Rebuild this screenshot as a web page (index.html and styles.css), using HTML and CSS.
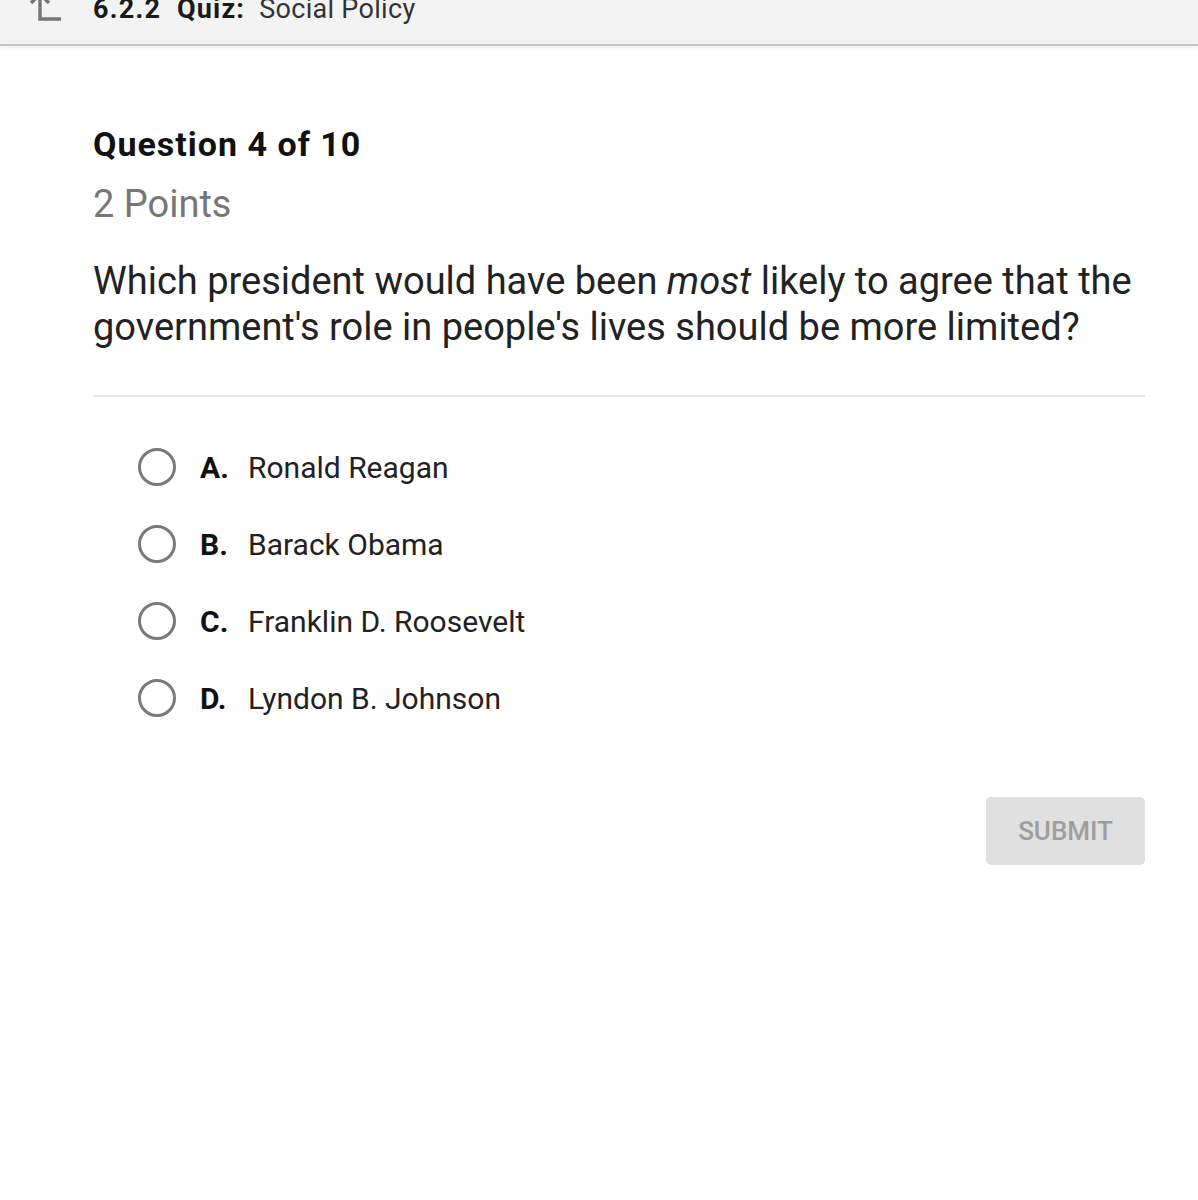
FILE: index.html
```html
<!DOCTYPE html>
<html>
<head>
<meta charset="utf-8">
<link rel="stylesheet" href="styles.css">
</head>
<body>
<header class="topbar">
  <svg class="back" width="36" height="30" viewBox="0 0 36 30">
    <path d="M13 -6 V19 H34" fill="none" stroke="#777" stroke-width="3.5"/>
    <path d="M4 3 L13 -6 L22 3" fill="none" stroke="#777" stroke-width="3.5"/>
  </svg>
  <div class="crumb"><b>6.2.2&nbsp; Quiz:</b>&nbsp; Social Policy</div>
</header>
<main class="content">
  <h1 class="qnum">Question 4 of 10</h1>
  <div class="points">2 Points</div>
  <p class="prompt">Which president would have been <i>most</i> likely to agree that the government's role in people's lives should be more limited?</p>
  <hr class="divider">
  <ul class="options">
    <li class="option"><span class="radio"></span><span class="letter">A.</span><span class="answer">Ronald Reagan</span></li>
    <li class="option"><span class="radio"></span><span class="letter">B.</span><span class="answer">Barack Obama</span></li>
    <li class="option"><span class="radio"></span><span class="letter">C.</span><span class="answer">Franklin D. Roosevelt</span></li>
    <li class="option"><span class="radio"></span><span class="letter">D.</span><span class="answer">Lyndon B. Johnson</span></li>
  </ul>
  <div class="actions"><button class="submit">SUBMIT</button></div>
</main>
</body>
</html>
```

FILE: styles.css
```css
html, body {
  margin: 0;
  padding: 0;
  background: #fff;
  font-family: Roboto, "Liberation Sans", sans-serif;
  color: #222;
}
.topbar {
  height: 44px;
  background: #f3f3f3;
  border-bottom: 2px solid #c6c6c6;
  box-shadow: 0 2px 2px rgba(0,0,0,0.06);
  display: flex;
  align-items: flex-start;
  overflow: hidden;
  position: relative;
}
.back {
  position: absolute;
  left: 27px;
  top: 0;
}
.crumb {
  margin-left: 93px;
  margin-top: -6px;
  font-size: 27px;
  line-height: 30px;
  color: #333;
  letter-spacing: 0.3px;
  white-space: nowrap;
}
.crumb b { color: #1a1a1a; letter-spacing: 1.2px; }
.content {
  padding: 0 53px 0 93px;
}
.qnum {
  margin: 0;
  padding-top: 78px;
  font-size: 34px;
  line-height: 40px;
  font-weight: 700;
  color: #111;
  letter-spacing: 1px;
}
.points {
  margin-top: 18px;
  font-size: 38px;
  line-height: 44px;
  color: #777;
}
.prompt {
  margin: 32px 0 0 0;
  font-size: 38px;
  line-height: 46px;
  color: #222;
  letter-spacing: 0;
}
.divider {
  margin: 45px 0 0 0;
  border: 0;
  height: 2px;
  background: #e4e4e4;
}
.options {
  list-style: none;
  margin: 51px 0 0 0;
  padding: 0 0 0 45px;
  display: flex;
  flex-direction: column;
  gap: 39px;
}
.option {
  display: flex;
  align-items: center;
  height: 38px;
  font-size: 30px;
}
.radio {
  width: 32px;
  height: 32px;
  border: 3px solid #7a7a7a;
  border-radius: 50%;
  flex: none;
}
.letter {
  font-weight: 700;
  margin-left: 24px;
  width: 48px;
  color: #111;
}
.answer { color: #222; }
.actions {
  display: flex;
  justify-content: flex-end;
  margin-top: 80px;
}
.submit {
  width: 159px;
  height: 68px;
  background: #e0e0e0;
  border: 0;
  border-radius: 5px;
  font-family: Roboto, "Liberation Sans", sans-serif;
  font-size: 26px;
  color: #9e9e9e;
  font-weight: 500;
}
```
